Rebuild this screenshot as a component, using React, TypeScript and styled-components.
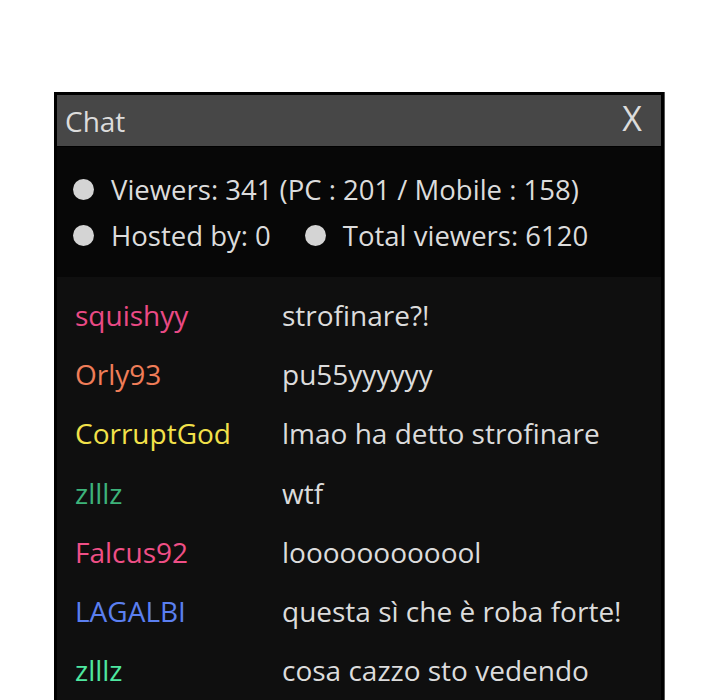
import React from 'react';
import styled, { createGlobalStyle } from 'styled-components';

const Global = createGlobalStyle`
  html, body {
    margin: 0;
    padding: 0;
    background: #ffffff;
  }
  body {
    font-family: "Open Sans", "Liberation Sans", sans-serif;
  }
`;

const S = {
  Window: styled.div`
    margin: 92px 0 0 54px;
    width: 604px;
    height: 620px;
    border: 3px solid #000;
    border-bottom: none;
    box-shadow: 1px 0 0 #555;
    display: flex;
    flex-direction: column;
    background: #0f0f0f;
  `,
  TitleBar: styled.div`
    height: 51px;
    display: flex;
    align-items: center;
    justify-content: space-between;
    padding: 0 19px 0 8px;
    background: #474747;
    border-bottom: 1px solid #000;
    color: #dcdcdc;
  `,
  Title: styled.span`
    font-size: 28px;
    margin-top: 1px;
  `,
  Close: styled.span`
    font-size: 34px;
    margin-top: -5px;
  `,
  Info: styled.div`
    height: 130px;
    box-sizing: border-box;
    padding: 19px 0 0 16px;
    background: #070707;
    color: #dcdcdc;
    font-size: 27.5px;
  `,
  InfoRow: styled.div`
    height: 46px;
    display: flex;
    align-items: center;
    gap: 34px;
  `,
  Stat: styled.span`
    display: flex;
    align-items: center;
    gap: 17px;
  `,
  Dot: styled.span`
    width: 21px;
    height: 21px;
    border-radius: 50%;
    background: #d4d4d4;
    flex-shrink: 0;
  `,
  Messages: styled.div`
    padding: 8px 0 0 18px;
  `,
  Row: styled.div`
    height: 59.3px;
    display: flex;
    align-items: center;
    font-size: 28px;
  `,
  Name: styled.span<{ $color: string }>`
    width: 207px;
    flex-shrink: 0;
    color: ${(p) => p.$color};
  `,
  Text: styled.span`
    color: #dcdcdc;
  `,
};

const messages = [
  { name: 'squishyy', color: '#ea4a85', text: 'strofinare?!' },
  { name: 'Orly93', color: '#f07d58', text: 'pu55yyyyyy' },
  { name: 'CorruptGod', color: '#f2e14a', text: 'lmao ha detto strofinare' },
  { name: 'zlllz', color: '#3db37a', text: 'wtf' },
  { name: 'Falcus92', color: '#ef4f86', text: 'l' + 'o'.repeat(11) + 'l' },
  { name: 'LAGALBI', color: '#5b7ff0', text: 'questa sì che è roba forte!' },
  { name: 'zlllz', color: '#4ee8a0', text: 'cosa cazzo sto vedendo' },
];

const App = () => {
  return (
    <>
      <Global />
      <S.Window>
        <S.TitleBar>
          <S.Title>Chat</S.Title>
          <S.Close>X</S.Close>
        </S.TitleBar>
        <S.Info>
          <S.InfoRow>
            <S.Stat>
              <S.Dot />
              Viewers: 341 (PC : 201 / Mobile : 158)
            </S.Stat>
          </S.InfoRow>
          <S.InfoRow>
            <S.Stat>
              <S.Dot />
              Hosted by: 0
            </S.Stat>
            <S.Stat>
              <S.Dot />
              Total viewers: 6120
            </S.Stat>
          </S.InfoRow>
        </S.Info>
        <S.Messages>
          {messages.map((m, i) => (
            <S.Row key={i}>
              <S.Name $color={m.color}>{m.name}</S.Name>
              <S.Text>{m.text}</S.Text>
            </S.Row>
          ))}
        </S.Messages>
      </S.Window>
    </>
  );
};

export default App;
